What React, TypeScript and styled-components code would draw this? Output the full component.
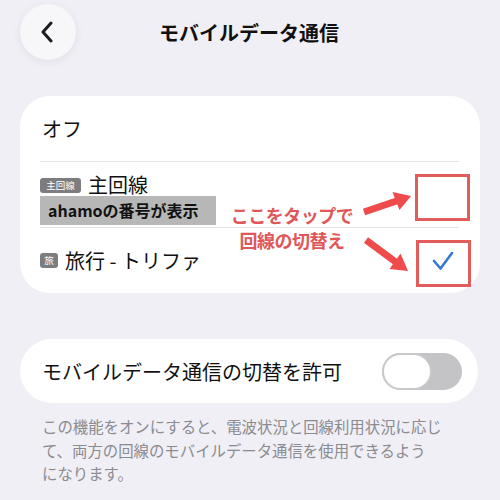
import React from "react";
import styled, { createGlobalStyle } from "styled-components";

const Global = createGlobalStyle`
  html, body { margin: 0; padding: 0; background: #f0eff5; }
  body { font-family: "Noto Sans CJK JP", "Noto Sans", sans-serif; color: #111; }
`;

const Page = styled.div`
  width: 500px;
  height: 500px;
  background: #f0eff5;
  overflow: hidden;
  display: flex;
  flex-direction: column;
`;

const Header = styled.header`
  display: grid;
  grid-template-columns: 1fr auto 1fr;
  align-items: center;
  height: 64px;
  padding: 0 20px;
`;

const BackButton = styled.button`
  width: 56px;
  height: 56px;
  border-radius: 50%;
  border: none;
  background: #f7f7f9;
  box-shadow: 0 2px 10px rgba(0, 0, 0, 0.07);
  display: flex;
  align-items: center;
  justify-content: center;
  padding: 0;
  justify-self: start;
`;

const Title = styled.h1`
  margin: 0;
  font-size: 20px;
  font-weight: 700;
  letter-spacing: 0;
  transform: translateX(-1px);
`;

const Card = styled.section`
  position: relative;
  margin: 32px 20px 0;
  background: #fff;
  border-radius: 30px;
  padding-left: 20px;
`;

const Row = styled.div<{ $h: number; $sep?: boolean }>`
  height: ${(p) => p.$h}px;
  box-sizing: border-box;
  margin-right: 21px;
  display: flex;
  align-items: center;
  justify-content: space-between;
  border-bottom: ${(p) => (p.$sep ? "1px solid #e3e3e6" : "none")};
`;

const Label = styled.span<{ $pad?: number }>`
  font-size: 20px;
  line-height: 22px;
  padding-left: ${(p) => p.$pad ?? 2}px;
`;

const LineStack = styled.div`
  display: flex;
  flex-direction: column;
  align-self: stretch;
  padding-top: 12px;
`;

const LineHead = styled.div`
  display: flex;
  align-items: center;
  gap: 7px;
  height: 22px;
`;

const Badge = styled.span<{ $w: number }>`
  width: ${(p) => p.$w}px;
  height: 15px;
  border-radius: 3px;
  background: #7d7d80;
  color: #fff;
  font-size: 9.5px;
  line-height: 15px;
  text-align: center;
  display: inline-block;
`;

const Highlight = styled.div`
  width: 176px;
  height: 29px;
  background: #b7b7b7;
  font-size: 16px;
  font-weight: 700;
  line-height: 29px;
  padding-left: 8px;
  box-sizing: border-box;
`;

const Check = styled.svg`
  width: 22px;
  height: 20px;
  margin-right: 5px;
`;

const RedBox = styled.div<{ $x: number; $y: number }>`
  position: absolute;
  left: ${(p) => p.$x}px;
  top: ${(p) => p.$y}px;
  width: 55px;
  height: 47px;
  box-sizing: border-box;
  border: 3px solid #e25c5c;
`;

const Note = styled.div`
  position: absolute;
  left: 205px;
  top: 107px;
  width: 134px;
  text-align: center;
  color: #e0575a;
  font-size: 18px;
  font-weight: 700;
  line-height: 25px;
  letter-spacing: -0.5px;
`;

const ArrowLayer = styled.svg`
  position: absolute;
  left: 0;
  top: 0;
  width: 460px;
  height: 197px;
  pointer-events: none;
`;

const ToggleCard = styled.section`
  margin: 46px 22px 0 20px;
  height: 64px;
  background: #fff;
  border-radius: 32px;
  display: flex;
  align-items: center;
  justify-content: space-between;
  padding: 0 16px 0 22px;
`;

const ToggleLabel = styled.span`
  font-size: 20px;
`;

const Track = styled.div`
  width: 80px;
  height: 37px;
  border-radius: 19px;
  background: #c4c4c6;
  display: flex;
  align-items: center;
`;

const Knob = styled.div`
  width: 50px;
  height: 37px;
  border-radius: 19px;
  background: #fff;
  border: 2px solid #c9c9cb;
  box-sizing: border-box;
`;

const Caption = styled.p`
  margin: 12px 0 0;
  padding: 0 20px 0 42px;
  font-size: 15.4px;
  line-height: 23.5px;
  color: #8b8b90;
  white-space: nowrap;
`;

export default function App() {
  return (
    <Page>
      <Global />
      <Header>
        <BackButton aria-label="戻る">
          <svg width="20" height="22" viewBox="0 0 20 22">
            <path d="M13 2 L5 11 L13 20" fill="none" stroke="#1c1c1e" strokeWidth="3" strokeLinecap="round" strokeLinejoin="round" />
          </svg>
        </BackButton>
        <Title>モバイルデータ通信</Title>
        <span />
      </Header>

      <Card>
        <Row $h={66} $sep>
          <Label>オフ</Label>
        </Row>
        <Row $h={66} $sep>
          <LineStack>
            <LineHead>
              <Badge $w={41}>主回線</Badge>
              <Label $pad={0}>主回線</Label>
            </LineHead>
            <Highlight>ahamoの番号が表示</Highlight>
          </LineStack>
        </Row>
        <Row $h={65}>
          <LineHead>
            <Badge $w={18}>旅</Badge>
            <Label $pad={0}>旅行 - トリファ</Label>
          </LineHead>
          <Check viewBox="0 0 22 20">
            <path d="M2 10 L8.5 17.5 L20 2" fill="none" stroke="#3478d6" strokeWidth="2.6" strokeLinecap="round" strokeLinejoin="round" />
          </Check>
        </Row>

        <RedBox $x={395} $y={78} />
        <RedBox $x={396} $y={144} />
        <Note>
          ここをタップで
          <br />
          回線の切替え
        </Note>
        <ArrowLayer viewBox="0 0 460 197">
          <line x1="344" y1="116" x2="378" y2="104.5" stroke="#ef4a4c" strokeWidth="7" />
          <polygon points="391,100 379.5,114 372.5,96" fill="#ef4a4c" />
          <line x1="346" y1="144" x2="377" y2="167" stroke="#ef4a4c" strokeWidth="7" />
          <polygon points="388,175 369.5,173 380.5,157.5" fill="#ef4a4c" />
        </ArrowLayer>
      </Card>

      <ToggleCard>
        <ToggleLabel>モバイルデータ通信の切替を許可</ToggleLabel>
        <Track>
          <Knob />
        </Track>
      </ToggleCard>

      <Caption>
        この機能をオンにすると、電波状況と回線利用状況に応じ
        <br />
        て、両方の回線のモバイルデータ通信を使用できるよう
        <br />
        になります。
      </Caption>
    </Page>
  );
}
